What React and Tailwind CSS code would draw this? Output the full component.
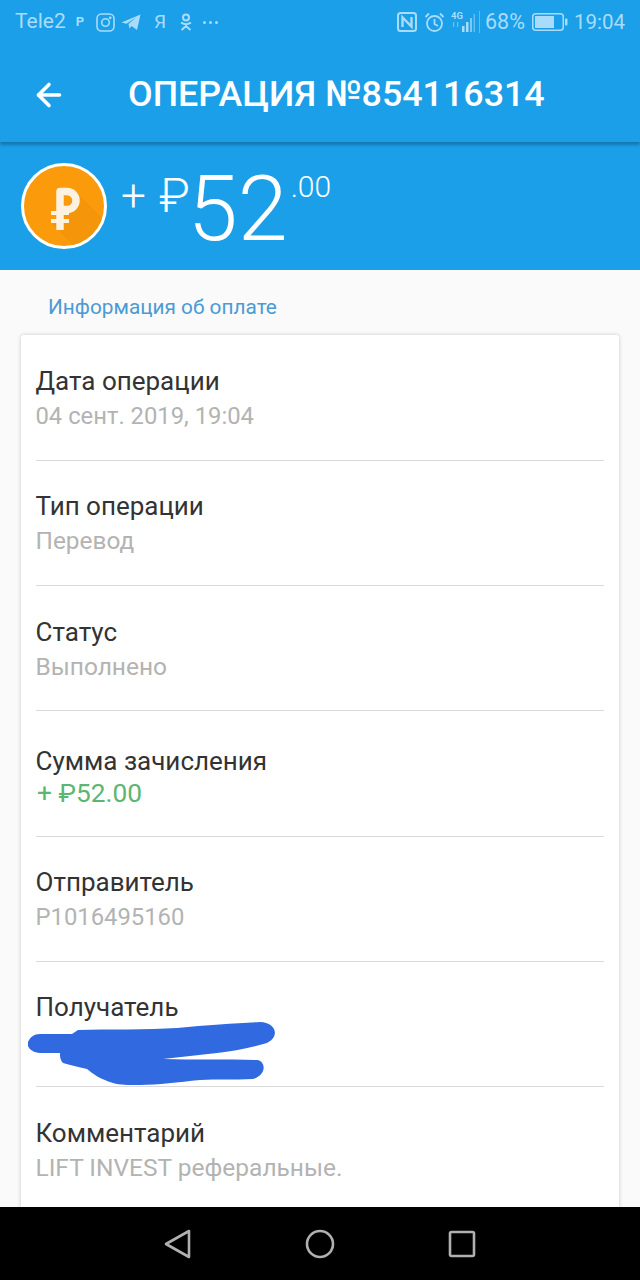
import { ArrowLeft } from 'lucide-react';

const rows = [
  { label: 'Дата операции', value: '04 сент. 2019, 19:04', size: 'text-[23.8px]' },
  { label: 'Тип операции', value: 'Перевод', size: 'text-[24.4px]' },
  { label: 'Статус', value: 'Выполнено', size: 'text-[24.5px]' },
  { label: 'Сумма зачисления', value: '+ ₽52.00', green: true },
  { label: 'Отправитель', value: 'P1016495160', size: 'text-[23.8px]' },
  { label: 'Получатель', scribble: true },
  { label: 'Комментарий', value: 'LIFT INVEST реферальные.', size: 'text-[24.5px]' },
];

function StatusBar() {
  return (
    <div className="h-[44px] flex items-center justify-between pl-[15px] pr-[15px] text-[21px] text-[#a9dcfa]">
      <div className="flex items-center">
        <span>Tele2</span>
        <span className="ml-[10px] text-[13px] font-bold">P</span>
        {/* instagram */}
        <svg className="ml-[12px]" width="19" height="19" viewBox="0 0 19 19" fill="none" stroke="currentColor" strokeWidth="1.6">
          <rect x="1" y="1" width="17" height="17" rx="4.5" />
          <circle cx="9.5" cy="9.5" r="3.8" />
          <circle cx="14.2" cy="4.8" r="0.6" fill="currentColor" />
        </svg>
        {/* telegram */}
        <svg className="ml-[6px]" width="20" height="18" viewBox="0 0 20 18" fill="currentColor">
          <path d="M0.5 9.5 19.5 1.5 16 17 10.5 13 8.5 15.5 7.5 11 15 4.5 5.5 10.8Z" />
        </svg>
        <span className="ml-[13px] text-[19px]">Я</span>
        {/* odnoklassniki */}
        <svg className="ml-[14px]" width="12" height="18" viewBox="0 0 12 18" fill="none" stroke="currentColor" strokeWidth="2">
          <circle cx="6" cy="4.5" r="3" />
          <path d="M1 9.5c3 2 7 2 10 0M6 11v2M1.5 17 6 13l4.5 4" />
        </svg>
        <span className="ml-[11px] flex gap-[3px]">
          <span className="w-[3px] h-[3px] rounded-full bg-[#a9dcfa]"></span>
          <span className="w-[3px] h-[3px] rounded-full bg-[#a9dcfa]"></span>
          <span className="w-[3px] h-[3px] rounded-full bg-[#a9dcfa]"></span>
        </span>
      </div>
      <div className="flex items-center">
        {/* nfc */}
        <svg width="20" height="20" viewBox="0 0 20 20" fill="none" stroke="currentColor">
          <rect x="1" y="1" width="18" height="18" rx="2.5" strokeWidth="2" />
          <path d="M5.5 15V5.5l9 9V5" strokeWidth="2.4" />
        </svg>
        {/* alarm */}
        <svg className="ml-[7px]" width="21" height="21" viewBox="0 0 21 21" fill="none" stroke="currentColor" strokeWidth="1.8">
          <circle cx="10.5" cy="11.5" r="7.5" />
          <path d="M10.5 7v5l3.5 2M1.5 5 5 1.5M19.5 5 16 1.5" />
        </svg>
        {/* network + signal */}
        <svg className="ml-[6px]" width="24" height="22" viewBox="0 0 24 22" fill="currentColor">
          <text x="0" y="8" fontSize="9.5" fontWeight="700" fontFamily="Roboto, sans-serif">4G</text>
          <path d="M2 11h1.2v5H2zM6 16h1.2v-5H6z" opacity="0.6" />
          <rect x="11" y="15" width="2.5" height="6" />
          <rect x="15" y="11" width="2.5" height="10" />
          <rect x="19" y="7" width="2" height="14" opacity="0.7" />
          <rect x="22.5" y="3" width="1.5" height="18" opacity="0.5" />
        </svg>
        <span className="ml-[4px] w-px h-[22px] bg-[#5fbcf0]"></span>
        <span className="ml-[5px] text-[21.5px]">68%</span>
        {/* battery */}
        <svg className="ml-[7px]" width="36" height="18" viewBox="0 0 36 18">
          <rect x="0.75" y="0.75" width="30.5" height="16.5" rx="3" fill="none" stroke="currentColor" strokeWidth="1.5" />
          <rect x="3" y="3" width="19" height="12" fill="currentColor" />
          <rect x="33" y="5.5" width="2.5" height="7" rx="1" fill="currentColor" />
        </svg>
        <span className="ml-[6px] text-[20.5px]">19:04</span>
      </div>
    </div>
  );
}

function CoinLogo() {
  return (
    <div className="w-[86px] h-[86px] shrink-0 rounded-full bg-[#fb9a0a] border-[3px] border-white overflow-hidden">
      <svg width="80" height="80" viewBox="0 0 80 80" fill="none">
        {/* long shadow */}
        <path d="M54 28 90 64 62 92 28 58Z" fill="#f4950a" />
        <g stroke="#fdf1df">
          <path d="M36 64V25.5h7a9 9 0 0 1 0 18H36" strokeWidth="7.5" strokeLinejoin="round" />
          <path d="M27 47h18M27 55h18" strokeWidth="4" />
        </g>
      </svg>
    </div>
  );
}

function Row({ row, last }) {
  return (
    <div className={`h-[125.3px] pt-[26.5px] relative ${last ? '' : 'border-b border-[#d9d9d9]'}`}>
      <div className={`text-[26px] leading-[38px] text-[#333333] -ml-[0.5px] ${row.green ? 'mt-[4px]' : ''}`}>{row.label}</div>
      {row.value && (
        <div className={`leading-[32px] -ml-[0.5px] ${row.green ? 'text-[26.3px] text-[#5cb671] ml-[1px] mt-[-3px]' : `${row.size} text-[#b3b3b3]`}`}>{row.value}</div>
      )}
      {row.scribble && (
        <svg className="absolute left-[-8px] top-[60px]" width="250" height="64" viewBox="0 0 250 64" fill="#3069e0">
          <path d="M12 12 44 12 50 8C80 7 120 8 149 6 180 3 210 1 232 0 247 0 253 14 239 21 222 26 205 29 189 31L135 37C165 38 200 37 229 38 238 39 239 53 225 57 205 58 190 57 172 58 150 60 130 63 112 63 100 63 92 63 85 61 72 57 65 52 59 47 50 45 42 43 35 41 32 38 32 34 32 31L12 31C4 31-2 25 0 20 2 15 6 12 12 12Z" />
        </svg>
      )}
    </div>
  );
}

export default function App() {
  return (
    <div className="w-[640px] h-[1280px] flex flex-col overflow-hidden bg-[#fafafa]" style={{ fontFamily: 'Roboto, sans-serif' }}>
      <div className="bg-[#1a9fe8] h-[142px] shrink-0 shadow-[0_3px_3px_rgba(0,0,0,0.25)] relative z-10">
        <StatusBar />
        <div className="flex items-center h-[98px] pt-[3px] text-white">
          <ArrowLeft className="ml-[31px]" size={36} strokeWidth={2.4} />
          <h1 className="ml-[61px] text-[35.8px] font-medium">ОПЕРАЦИЯ №854116314</h1>
        </div>
      </div>

      <div className="bg-[#1a9fe8] h-[128px] shrink-0 flex items-center pl-[21px] text-white font-light">
        <CoinLogo />
        <div className="ml-[14px] flex items-start h-[100px] pt-[8px]">
          <span className="text-[44px] leading-[64px] w-[38px]">+</span>
          <span className="text-[48px] leading-[64px]">₽</span>
          <span className="text-[90px] leading-[92px] mt-[0px] ml-[-2px]">52</span>
          <span className="text-[30px] leading-[40px] ml-[3px] mt-[3px]">.00</span>
        </div>
      </div>

      <div className="flex-1 min-h-0 overflow-hidden">
        <div className="pl-[48px] h-[65px] pt-[22px] text-[20.8px] leading-[30px] text-[#4a9bd4]">Информация об оплате</div>
        <div className="mx-[21px] pt-[0.5px] bg-white rounded-[3px] shadow-[0_0_4px_rgba(0,0,0,0.2)] px-[15px]">
          {rows.map((row, i) => (
            <Row key={row.label} row={row} last={i === rows.length - 1} />
          ))}
        </div>
      </div>

      <div className="h-[73px] shrink-0 bg-black flex items-center justify-center gap-[113px] text-[#b0b0b0]">
        <svg width="28" height="30" viewBox="0 0 28 30" fill="none" stroke="currentColor" strokeWidth="2.6" strokeLinejoin="round">
          <path d="M25 2V28L2 15Z" />
        </svg>
        <svg width="30" height="30" viewBox="0 0 30 30" fill="none" stroke="currentColor" strokeWidth="2.6">
          <circle cx="15" cy="15" r="13" />
        </svg>
        <svg width="28" height="28" viewBox="0 0 28 28" fill="none" stroke="currentColor" strokeWidth="2.6" strokeLinejoin="round">
          <rect x="2" y="2" width="24" height="24" rx="1.5" />
        </svg>
      </div>
    </div>
  );
}
